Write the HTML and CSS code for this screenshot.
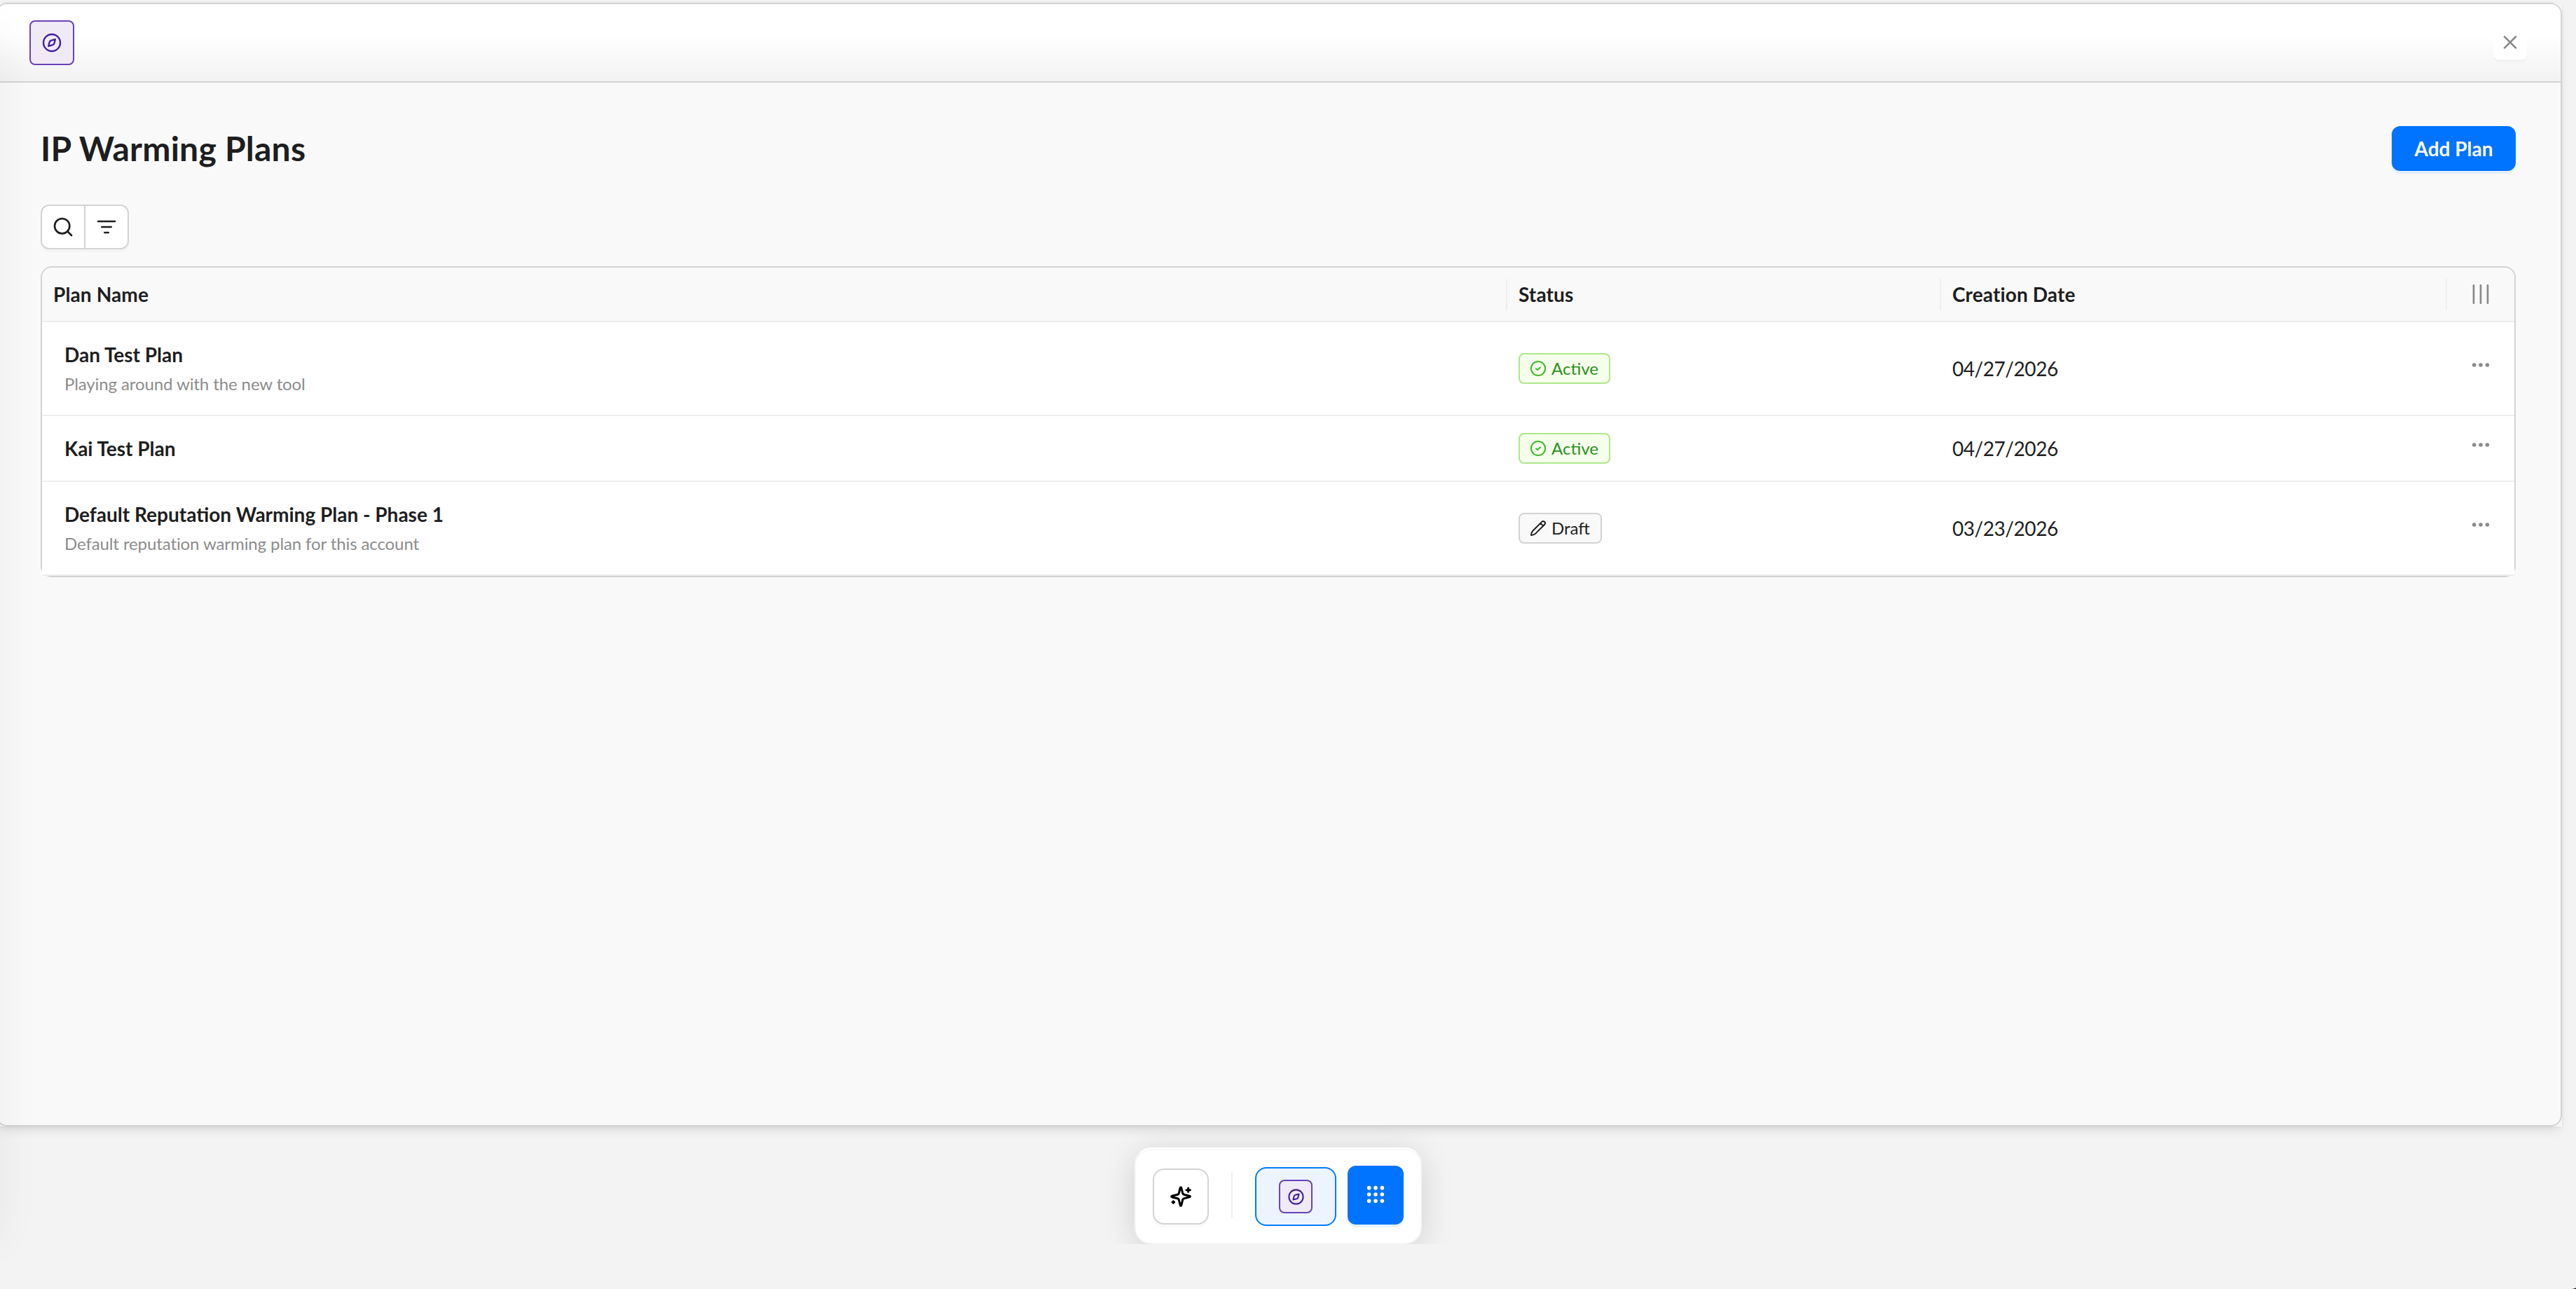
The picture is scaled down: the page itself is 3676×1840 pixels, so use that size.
FILE: index.html
```html
<!DOCTYPE html>
<html lang="en">
<head>
  <meta charset="UTF-8" />
  <meta name="viewport" content="width=device-width, initial-scale=1" />
  <title>IP Warming Plans</title>
  <link rel="stylesheet" href="styles.css">
</head>
<body>
  <!-- Shared icons -->
  <svg class="sprite" aria-hidden="true">
    <symbol id="compass" viewBox="0 0 24 24">
      <circle cx="12" cy="12" r="9"/>
      <path d="M8.4 15.6 9.5 11.2a2.2 2.2 0 0 1 1.6-1.6L15.6 8.4 14.5 12.8a2.2 2.2 0 0 1-1.6 1.6z"/>
    </symbol>
    <symbol id="check" viewBox="0 0 24 24">
      <circle cx="12" cy="12" r="10.1"/>
      <path d="M9 12.3l2.1 1.8 4-3.6"/>
    </symbol>
    <symbol id="dots" viewBox="0 0 24 24">
      <circle cx="5" cy="12" r="2.1"/>
      <circle cx="12" cy="12" r="2.1"/>
      <circle cx="19" cy="12" r="2.1"/>
    </symbol>
  </svg>

  <div class="app">
    <div class="panel-wrap">
      <main class="panel">
        <header class="panel-header">
          <div class="app-icon"><svg class="icon" width="32" height="32"><use href="#compass"/></svg></div>
          <button class="btn-close" aria-label="Close">
            <svg class="icon" width="32" height="32" viewBox="0 0 24 24"><path d="M6 5.5l12 12M18 5.5l-12 12"/></svg>
          </button>
        </header>

        <div class="content">
          <div class="title-row">
            <h1>IP Warming Plans</h1>
            <button class="btn-primary">Add Plan</button>
          </div>

          <div class="toolbar">
            <button aria-label="Search">
              <svg class="icon" width="32" height="32" viewBox="0 0 24 24"><circle cx="11" cy="11" r="8"/><path d="M21 21l-4.3-4.3"/></svg>
            </button>
            <button aria-label="Filter">
              <svg class="icon" width="32" height="32" viewBox="0 0 24 24"><path d="M3 6h18M7 12h10M10 18h4"/></svg>
            </button>
          </div>

          <div class="table">
            <div class="row head">
              <div class="cell">Plan Name</div>
              <div class="cell">Status</div>
              <div class="cell">Creation Date</div>
              <div class="cell actions">
                <svg class="icon" width="32" height="32" viewBox="0 0 24 24"><path d="M4.5 2.5v19M12 2.5v19M19.5 2.5v19"/></svg>
              </div>
            </div>
            <div class="row">
              <div class="cell name">
                <div class="plan">Dan Test Plan</div>
                <div class="desc">Playing around with the new tool</div>
              </div>
              <div class="cell"><span class="tag active"><svg class="icon" width="24" height="24"><use href="#check"/></svg>Active</span></div>
              <div class="cell date">04/27/2026</div>
              <div class="cell actions"><svg class="dots" width="32" height="32"><use href="#dots"/></svg></div>
            </div>
            <div class="row">
              <div class="cell name">
                <div class="plan">Kai Test Plan</div>
              </div>
              <div class="cell"><span class="tag active"><svg class="icon" width="24" height="24"><use href="#check"/></svg>Active</span></div>
              <div class="cell date">04/27/2026</div>
              <div class="cell actions"><svg class="dots" width="32" height="32"><use href="#dots"/></svg></div>
            </div>
            <div class="row">
              <div class="cell name">
                <div class="plan">Default Reputation Warming Plan - Phase 1</div>
                <div class="desc">Default reputation warming plan for this account</div>
              </div>
              <div class="cell"><span class="tag"><svg class="icon" width="24" height="24" viewBox="0 0 24 24"><path d="M2 22c0-2.6.8-4.7 2.6-6.5L17.2 2.9a2.7 2.7 0 0 1 3.9 3.9L8.5 19.4C6.7 21.2 4.6 22 2 22zM15.4 4.9l3.7 3.7"/></svg>Draft</span></div>
              <div class="cell date">03/23/2026</div>
              <div class="cell actions"><svg class="dots" width="32" height="32"><use href="#dots"/></svg></div>
            </div>
          </div>
        </div>
      </main>
    </div>

    <div class="dock-area">
      <nav class="dock">
        <button class="dock-ai" aria-label="Assistant">
          <svg class="icon" width="32" height="32" viewBox="0 0 24 24">
            <path d="M9.937 15.5A2 2 0 0 0 8.5 14.063l-6.135-1.582a.5.5 0 0 1 0-.962L8.5 9.936A2 2 0 0 0 9.937 8.5l1.582-6.135a.5.5 0 0 1 .963 0L14.063 8.5A2 2 0 0 0 15.5 9.937l6.135 1.581a.5.5 0 0 1 0 .964L15.5 14.063a2 2 0 0 0-1.437 1.437l-1.582 6.135a.5.5 0 0 1-.963 0zM20 3v4M22 5h-4M4 17v2M5 18H3"/>
          </svg>
        </button>
        <div class="dock-divider"></div>
        <button class="dock-app" aria-label="IP Warming">
          <span class="app-icon small"><svg class="icon" width="27" height="27"><use href="#compass"/></svg></span>
        </button>
        <button class="dock-grid" aria-label="All apps">
          <svg class="grid-dots" width="32" height="32" viewBox="0 0 24 24">
            <circle cx="5" cy="5" r="2.1"/><circle cx="12" cy="5" r="2.1"/><circle cx="19" cy="5" r="2.1"/>
            <circle cx="5" cy="12" r="2.1"/><circle cx="12" cy="12" r="2.1"/><circle cx="19" cy="12" r="2.1"/>
            <circle cx="5" cy="19" r="2.1"/><circle cx="12" cy="19" r="2.1"/><circle cx="19" cy="19" r="2.1"/>
          </svg>
        </button>
      </nav>
    </div>
  </div>
</body>
</html>
```

FILE: styles.css
```css
* {
  box-sizing: border-box;
}
html {
  background: #000;
}
body {
  margin: 0;
  font-family: Lato, "Liberation Sans", sans-serif;
  font-size: 28px;
  line-height: 44px;
  color: #1e1e1e;
}
button {
  font: inherit;
  color: inherit;
  margin: 0;
  padding: 0;
  border: none;
  cursor: pointer;
  display: flex;
  align-items: center;
  justify-content: center;
}
svg {
  display: block;
}
.sprite {
  position: absolute;
  width: 0;
  height: 0;
}
.icon {
  fill: none;
  stroke: currentColor;
  stroke-width: 2;
  stroke-linecap: round;
  stroke-linejoin: round;
}

.app {
  position: relative;
  height: 100vh;
  padding-top: 4px;
  background: #f3f3f3;
  border-bottom-right-radius: 10px 2px;
  overflow: hidden;
}
/* shadow cast by the collapsed side menu */
.app::after {
  content: "";
  position: absolute;
  left: -100px;
  top: 44px;
  bottom: 70px;
  width: 100px;
  box-shadow: 0 0 64px rgba(0,0,0,0.055);
  pointer-events: none;
}

/* Panel */
.panel-wrap {
  height: 1604px;
  margin: 0 20px 0 -6px;
  background: #f6f6f6;
  box-shadow: 0 0 4px rgba(0,0,0,0.06), 0 8px 14px -4px rgba(0,0,0,0.12);
}
.panel {
  height: 100%;
  border: 2px solid #d3d3d3;
  border-radius: 16px;
  background: #f9f9f9;
  overflow: hidden;
}
.panel-header {
  height: 112px;
  padding: 0 48px 0 46px;
  display: flex;
  align-items: center;
  justify-content: space-between;
  border-bottom: 2px solid #d3d3d3;
  background: linear-gradient(#fff 40%, #f2f2f2);
}
.app-icon {
  width: 64px;
  height: 64px;
  display: flex;
  align-items: center;
  justify-content: center;
  border: 2px solid #6b42b8;
  border-radius: 8px;
  background: #f0eaf7;
  color: #431d9f;
}
.app-icon .icon {
  stroke-width: 1.8;
}
.app-icon.small {
  width: 48px;
  height: 48px;
}
.btn-close {
  width: 48px;
  height: 48px;
  border-radius: 8px;
  background: #fff;
  color: #888;
  box-shadow: 0 4px 0 rgba(0,0,0,0.02);
}

.content {
  padding: 62px 64px 0 62px;
}
.title-row {
  display: flex;
  align-items: center;
  justify-content: space-between;
}
h1 {
  margin: 0;
  font-size: 48px;
  line-height: 64px;
  font-weight: 700;
  letter-spacing: 0.25px;
}
.btn-primary {
  width: 177px;
  height: 64px;
  border-radius: 12px;
  background: #0073ff;
  color: #fff;
  font-weight: 700;
  box-shadow: 0 4px 0 #e3effc;
}
.toolbar {
  width: 126px;
  height: 64px;
  margin: 48px 0 24px;
  display: flex;
  border: 2px solid #d3d3d3;
  border-radius: 12px;
  background: #fff;
  box-shadow: 0 4px 0 rgba(0,0,0,0.02);
}
.toolbar button {
  flex: 1;
  background: none;
}
.toolbar button + button {
  border-left: 2px solid #d3d3d3;
}

/* Table */
.table {
  border: 2px solid #d3d3d3;
  border-radius: 16px;
}
.row {
  display: grid;
  grid-template-columns: 2091px 619px 722px 96px;
  align-items: center;
  background: #fff;
  border-bottom: 2px solid #eee;
}
.row.head {
  height: 78px;
  background: #f9f9f9;
  border-radius: 14px 14px 0 0;
  font-weight: 700;
  letter-spacing: 0.12px;
}
.cell {
  padding: 0 16px;
}
.cell.name {
  padding: 24px 32px;
}
.head .cell + .cell {
  position: relative;
}
.head .cell + .cell::before {
  content: "";
  position: absolute;
  left: -2px;
  top: 50%;
  width: 2px;
  height: 45px;
  margin-top: -22px;
  background: #eee;
}
.plan {
  font-weight: 700;
}
.desc {
  font-size: 24px;
  line-height: 40px;
  letter-spacing: -0.1px;
  color: #8c8c8c;
}
.date {
  letter-spacing: -0.45px;
}
.actions {
  display: flex;
  justify-content: center;
  color: #8a8a8a;
}
.dots {
  fill: currentColor;
  margin-bottom: 10px;
}
.tag {
  height: 44px;
  padding: 0 15px 0 14px;
  display: inline-flex;
  align-items: center;
  gap: 7px;
  vertical-align: top;
  border: 2px solid #d3d3d3;
  border-radius: 8px;
  background: #f9f9f9;
  font-size: 24px;
  line-height: 40px;
}
.tag.active {
  border-color: #ade88a;
  background: #f6ffeb;
  color: #2c8f22;
}
.tag.active .icon {
  color: #3dba2b;
}

/* Dock */
.dock-area {
  height: 168px;
  padding: 30px 28px 0 0;
  display: flex;
  justify-content: center;
  overflow: hidden;
}
.dock {
  width: 410px;
  height: 138px;
  padding: 0 24px;
  display: flex;
  align-items: center;
  border: 2px solid #f6f6f6;
  border-top-color: #fff;
  border-radius: 24px;
  background: #fff;
  box-shadow: 0 8px 48px rgba(0,0,0,0.14), inset 0 2px 0 #f8f8f8;
}
.dock-ai {
  width: 80px;
  height: 80px;
  margin-top: 2px;
  border: 2px solid #d3d3d3;
  border-radius: 16px;
  background: #fff;
  color: #000;
  box-shadow: 0 4px 0 rgba(0,0,0,0.02);
}
.dock-ai .icon {
  stroke-width: 2.3;
}
.dock-divider {
  width: 2px;
  height: 64px;
  margin: 0 32px 2px;
  background: #eee;
}
.dock-app {
  width: 116px;
  height: 84px;
  margin: 2px 16px 0 0;
  border: 2px solid #007bff;
  border-radius: 16px;
  background: #ebf4ff;
}
.dock-grid {
  width: 80px;
  height: 84px;
  margin-bottom: 2px;
  border-radius: 12px;
  background: #0073ff;
  box-shadow: 0 4px 0 #e6f3ff;
}
.grid-dots {
  fill: #fff;
  margin-bottom: 2px;
}
```
